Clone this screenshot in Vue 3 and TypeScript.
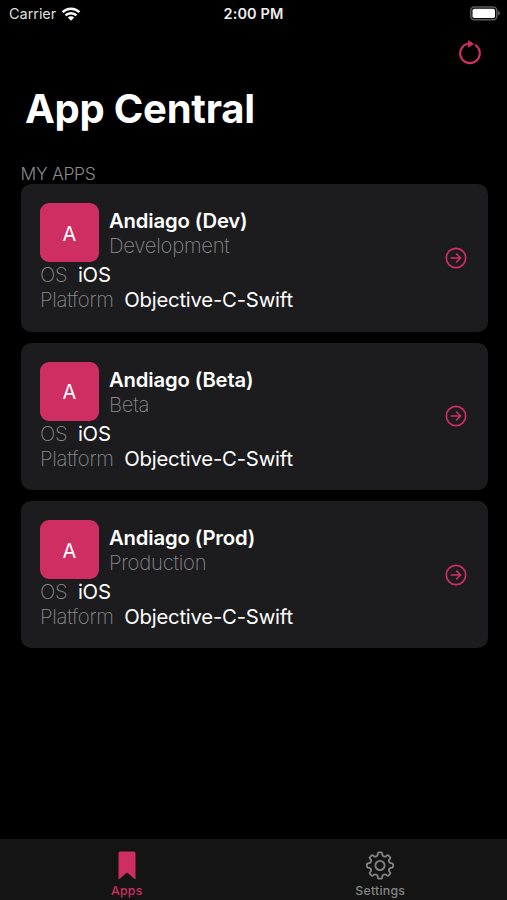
<script setup lang="ts">
interface AppEntry {
  initial: string
  name: string
  stage: string
  key: string
  os: string
  platform: string
}

const apps: AppEntry[] = [
  { key: 'dev', initial: 'A', name: 'Andiago (Dev)', stage: 'Development', os: 'iOS', platform: 'Objective-C-Swift' },
  { key: 'beta', initial: 'A', name: 'Andiago (Beta)', stage: 'Beta', os: 'iOS', platform: 'Objective-C-Swift' },
  { key: 'prod', initial: 'A', name: 'Andiago (Prod)', stage: 'Production', os: 'iOS', platform: 'Objective-C-Swift' },
]

// Outline of an eight-toothed gear centred on the origin
function gearPath(): string {
  const teeth = 8
  const step = (Math.PI * 2) / teeth
  const at = (r: number, a: number) => `${(r * Math.sin(a)).toFixed(2)} ${(-r * Math.cos(a)).toFixed(2)}`
  let d = ''
  for (let i = 0; i < teeth; i++) {
    const a = i * step
    d += `${i ? 'L' : 'M'}${at(10.9, a - 0.21)}Q${at(13.2, a - 0.18)} ${at(13.1, a - 0.09)}L${at(13.1, a + 0.09)}`
    d += `Q${at(13.2, a + 0.18)} ${at(10.9, a + 0.21)}Q${at(8.9, a + step / 2)} ${at(10.9, a + step - 0.21)}`
  }
  return d + 'Z'
}
const gear = gearPath()
</script>

<template>
  <div class="screen">
    <header class="status">
      <div class="carrier">
        <span>Carrier</span>
        <svg class="wifi" width="20" height="16" viewBox="0 0 20 16">
          <path d="M1.600 6.100a12 12 0 0 1 16.800 0" />
          <path d="M4.500 9.400a7.800 7.800 0 0 1 11 0" />
          <path class="dot" d="M10 14.700l-3.200-3.200a4.500 4.500 0 0 1 6.400 0z" />
        </svg>
      </div>
      <span class="time">2:00 PM</span>
      <svg class="battery" width="30" height="15" viewBox="0 0 30 15">
        <rect class="shell" x="0.8" y="0.900" width="26" height="12.900" rx="3.500" />
        <rect class="charge" x="2.500" y="2.800" width="22.500" height="9.200" rx="1.800" />
        <path class="cap" d="M28 5c1.300.5 1.900 1.300 1.900 2.300s-.6 1.800-1.900 2.300z" />
      </svg>
    </header>

    <div class="toolbar">
      <svg width="24" height="26" viewBox="0 0 24 26">
        <path class="ring" d="M17.800 5.400A9.800 9.800 0 1 1 11.600 3.500" />
        <path class="head" d="M10.300.600l5.300 3.300-5.300 3.300z" />
      </svg>
    </div>

    <h1 class="title">App Central</h1>
    <h2 class="section">MY APPS</h2>

    <main class="cards">
      <article v-for="app in apps" :key="app.key" class="card">
        <div class="info">
          <div class="top">
            <div class="tile">{{ app.initial }}</div>
            <div class="names">
              <span class="name">{{ app.name }}</span>
              <span class="light">{{ app.stage }}</span>
            </div>
          </div>
          <div class="row"><span class="light">OS</span><span class="value">{{ app.os }}</span></div>
          <div class="row"><span class="light">Platform</span><span class="value">{{ app.platform }}</span></div>
        </div>
        <svg class="go" width="22" height="22" viewBox="0 0 22 22">
          <circle cx="11" cy="11" r="9.700" />
          <path d="M6.300 11h9.200M11.600 7l4 4-4 4" />
        </svg>
      </article>
    </main>

    <nav class="tabs">
      <div class="tab active">
        <svg width="18" height="29" viewBox="0 0 18 29">
          <path class="mark" d="M2.200.5h13.600q1.700 0 1.700 1.700v25.200q0 1.500-1.200.4L9 21.500l-7.300 6.300q-1.200 1.100-1.200-.4V2.200Q.5.500 2.200.500z" />
        </svg>
        <span>Apps</span>
      </div>
      <div class="tab">
        <svg width="30" height="29" viewBox="-15 -14.500 30 29">
          <path class="gear" :d="gear" />
          <circle class="gear" r="4.600" />
        </svg>
        <span>Settings</span>
      </div>
    </nav>
  </div>
</template>

<style>
body {
  background: #000;
}
</style>

<style scoped>
.screen {
  width: 507px;
  height: 900px;
  overflow: hidden;
  display: flex;
  flex-direction: column;
  background: #000;
  color: #fff;
  font-family: Inter, "Liberation Sans", sans-serif;
}
.status {
  height: 27px;
  box-sizing: border-box;
  display: grid;
  grid-template-columns: 1fr auto 1fr;
  align-items: center;
  padding: 0 7px 0 9px;
}
.carrier {
  display: flex;
  align-items: center;
  gap: 5px;
  font-size: 14.5px;
  letter-spacing: -0.05px;
  color: #ddd;
}
.wifi {
  fill: none;
  stroke: #fff;
  stroke-width: 2.5;
}
.wifi .dot {
  fill: #fff;
  stroke: none;
}
.time {
  padding-right: 2px;
  font-size: 14.5px;
  font-weight: 600;
  letter-spacing: 0.1px;
  color: #eee;
}
.battery {
  justify-self: end;
}
.shell {
  fill: none;
  stroke: #5c5c5c;
  stroke-width: 1.5;
}
.charge {
  fill: #fff;
}
.cap {
  fill: #5c5c5c;
}
.toolbar {
  height: 52px;
  display: flex;
  justify-content: flex-end;
  padding: 13px 25px 0 0;
  box-sizing: border-box;
}
.ring {
  fill: none;
  stroke: #d12f65;
  stroke-width: 2.2;
  stroke-linecap: round;
}
.head {
  fill: #d12f65;
  stroke: #d12f65;
  stroke-width: 0.8;
  stroke-linejoin: round;
}
.title {
  margin: 0;
  padding-left: 25px;
  height: 84px;
  line-height: 60px;
  font-size: 40px;
  font-weight: 700;
  letter-spacing: -0.25px;
  white-space: nowrap;
}
.section {
  margin: 0;
  padding-left: 20.5px;
  height: 21px;
  line-height: 22px;
  font-size: 17.5px;
  font-weight: 300;
  letter-spacing: -0.3px;
  color: #8a8a8c;
}
.cards {
  flex: 1;
  display: flex;
  flex-direction: column;
  gap: 11px;
  padding: 0.2px 19.5px 0 20.5px;
}
.card {
  height: 147.4px;
  box-sizing: border-box;
  display: flex;
  align-items: center;
  justify-content: space-between;
  padding: 0 20.5px 0 19.5px;
  border-radius: 10px;
  background: #1c1c1e;
}
.top {
  display: flex;
  align-items: center;
  gap: 10px;
}
.tile {
  width: 59px;
  height: 59px;
  box-sizing: border-box;
  padding-top: 2px;
  display: flex;
  align-items: center;
  justify-content: center;
  border-radius: 9px;
  background: #cf2e63;
  font-size: 20px;
}
.names {
  display: flex;
  flex-direction: column;
  padding-top: 0.4px;
  line-height: 25px;
}
.name {
  font-size: 20.3px;
  font-weight: 600;
  letter-spacing: -0.15px;
}
.light {
  font-size: 20.3px;
  font-weight: 200;
  letter-spacing: -0.25px;
  color: #8a8a8e;
}
.row {
  display: flex;
  gap: 10.5px;
  height: 24.9px;
  line-height: 25px;
}
.value {
  font-size: 20.3px;
  letter-spacing: -0.2px;
}
.go {
  fill: none;
  stroke: #cf2e63;
  stroke-width: 1.7;
  stroke-linecap: round;
  stroke-linejoin: round;
}
.tabs {
  height: 61px;
  display: grid;
  grid-template-columns: 1fr 1fr;
  background: #141414;
}
.tab {
  display: flex;
  flex-direction: column;
  align-items: center;
  padding-top: 12.4px;
  gap: 3px;
  font-size: 12.3px;
  line-height: 15px;
  font-weight: 500;
  letter-spacing: 0.25px;
  color: #858585;
}
.tab.active {
  color: #cf2e63;
}
.mark {
  fill: #cf2e63;
}
.gear {
  fill: none;
  stroke: #858585;
  stroke-width: 1.8;
  stroke-linejoin: round;
}
</style>
